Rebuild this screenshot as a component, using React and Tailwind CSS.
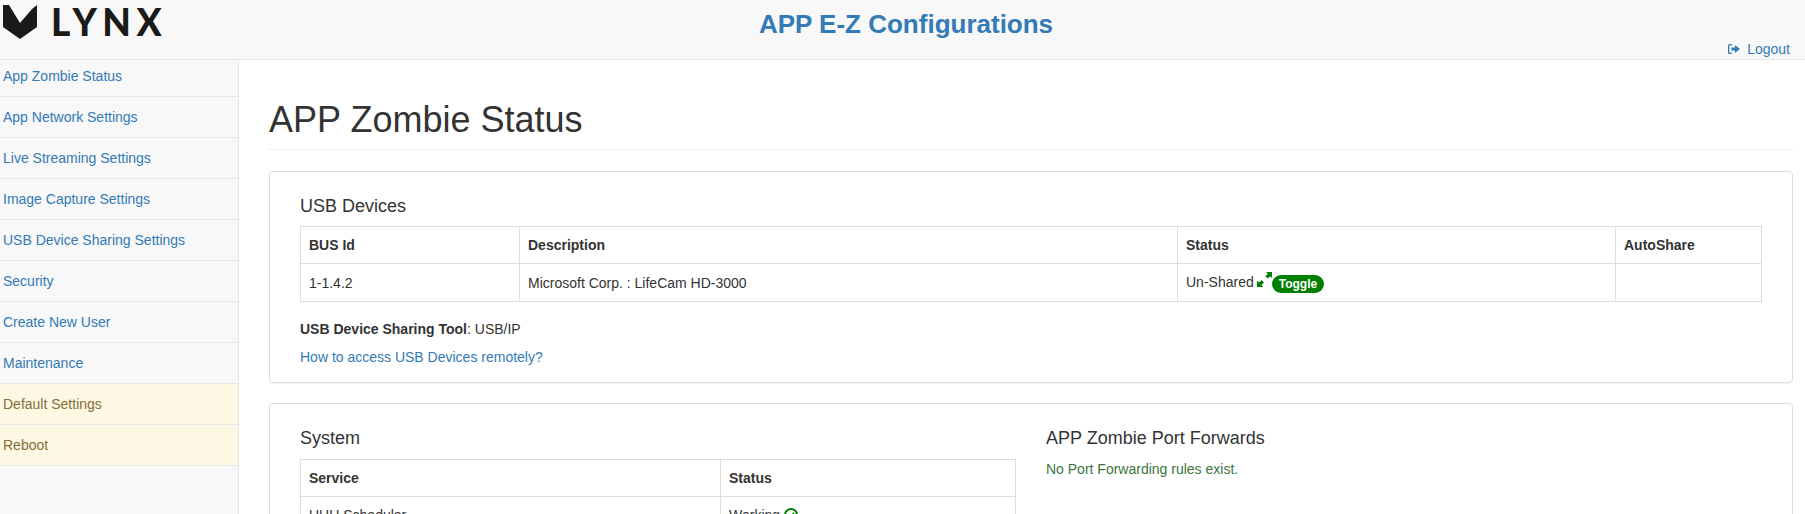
const menu = [
  'App Zombie Status',
  'App Network Settings',
  'Live Streaming Settings',
  'Image Capture Settings',
  'USB Device Sharing Settings',
  'Security',
  'Create New User',
  'Maintenance',
];
const warnMenu = ['Default Settings', 'Reboot'];

const Logo = () => (
  <div className="flex items-start">
    <svg width="34" height="34" viewBox="0 0 34 34" className="mt-[5px] ml-[3px]" fill="#1a1a18">
      <path d="M0 0 H6 L17 18 L29 4 L34 0 V22 L17 34 L0 22 Z" />
    </svg>
    <span className="ml-[14px] font-['Lato',sans-serif] text-[37px] leading-[44px] font-black tracking-[5.6px] text-[#1a1a18]">LYNX</span>
  </div>
);

const LogoutIcon = () => (
  <svg width="12" height="12" viewBox="0 0 12 12" className="mr-[7px] text-[#337ab7]" fill="currentColor">
    <path d="M0 2.5 Q0 1 1.5 1 H4 V2.3 H1.8 Q1.3 2.3 1.3 2.8 V9.2 Q1.3 9.7 1.8 9.7 H4 V11 H1.5 Q0 11 0 9.5 Z" />
    <path d="M3.5 4.5 H7 V2 L12 6 L7 10 V7.5 H3.5 Z" />
  </svg>
);

const ShareIcon = () => (
  <svg width="15" height="15" viewBox="0 0 15 15" className="inline-block ml-[3px] align-[0px]">
    <path d="M0 15 V8.5 L2 10.5 L4.6 8 L7 10.4 L4.4 13 L6.5 15 Z" fill="#008000" />
    <path d="M15 0 V6 L13.2 4.2 L10.8 6.6 L8.4 4.2 L10.8 1.8 L9 0 Z" fill="#008000" />
  </svg>
);

const OkCircle = () => (
  <svg width="14" height="14" viewBox="0 0 14 14" className="ml-[4px] inline-block align-[-2px]" fill="none" stroke="#008000" strokeWidth="2">
    <circle cx="7" cy="7" r="6" />
    <path d="M4 7.2 L6.2 9.2 L10 4.8" strokeWidth="1.5" />
  </svg>
);

const Th = ({ children, className = '' }) => (
  <th className={`border border-[#ddd] p-2 text-left text-sm font-bold leading-5 text-[#333] ${className}`}>{children}</th>
);
const Td = ({ children, className = '' }) => (
  <td className={`border border-[#ddd] p-2 text-sm leading-5 text-[#333] ${className}`}>{children}</td>
);

export default function App() {
  return (
    <div className="flex h-[514px] flex-col overflow-hidden bg-white font-['Liberation_Sans',Arial,sans-serif] text-sm text-[#333]">
      <header className="relative h-[60px] shrink-0 border-b border-[#e7e7e7] bg-[#f8f8f8]">
        <Logo />
        <h1 className="absolute inset-x-0 top-[9px] pl-[7px] text-center text-[26px] leading-[30px] font-bold text-[#337ab7]">APP E-Z Configurations</h1>
        <a className="absolute right-[15px] top-[39px] flex items-center text-sm leading-5 text-[#337ab7]">
          <LogoutIcon />
          Logout
        </a>
      </header>
      <div className="flex min-h-0 flex-1">
        <aside className="w-[239px] shrink-0 border-r border-[#e7e7e7] bg-[#f8f8f8]">
          {menu.map((item, i) => (
            <a key={item} className={`block border-b border-[#e7e7e7] pl-[3px] leading-5 text-[#337ab7] ${i === 0 ? 'h-[37px] pt-[6px]' : 'h-[41px] pt-[10px]'}`}>{item}</a>
          ))}
          {warnMenu.map((item) => (
            <a key={item} className="block h-[41px] border-b border-[#e7e7e7] bg-[#fcf8e3] pl-[3px] pt-[10px] leading-5 text-[#8a6d3b]">{item}</a>
          ))}
        </aside>
        <main className="min-w-0 flex-1 pl-[30px] pr-[12px]">
          <div className="mt-[40px] mb-[21px] border-b border-[#eee] pb-[9px]">
            <h2 className="text-[36px] leading-[40px] font-normal text-[#333]">APP Zombie Status</h2>
          </div>
          <section className="mb-[20px] rounded border border-[#ddd] pt-[15px] pb-[15px] pl-[30px] pr-[30px] shadow-[0_1px_1px_rgba(0,0,0,0.05)]">
            <h3 className="mt-[9px] mb-[10px] text-lg leading-5 font-normal text-[#333]">USB Devices</h3>
            <table className="w-full table-fixed border-collapse">
              <thead>
                <tr>
                  <Th className="w-[219px]">BUS Id</Th>
                  <Th className="w-[658px]">Description</Th>
                  <Th className="w-[438px]">Status</Th>
                  <Th>AutoShare</Th>
                </tr>
              </thead>
              <tbody>
                <tr>
                  <Td>1-1.4.2</Td>
                  <Td>Microsoft Corp. : LifeCam HD-3000</Td>
                  <Td>
                    Un-Shared
                    <ShareIcon />
                    <span className="inline-block rounded-[10px] bg-[#008000] px-[7px] py-[3px] align-[-1px] text-xs leading-3 font-bold text-white">Toggle</span>
                  </Td>
                  <Td></Td>
                </tr>
              </tbody>
            </table>
            <p className="mt-[17px] leading-5"><b>USB Device Sharing Tool</b>: USB/IP</p>
            <p className="mt-[8px] leading-5 text-[#337ab7]">How to access USB Devices remotely?</p>
          </section>
          <section className="rounded border border-[#ddd] py-[15px] pl-[30px] pr-[30px]">
            <div className="grid grid-cols-2 gap-[30px]">
              <div>
                <h3 className="mt-[9px] mb-[11px] text-lg leading-5 font-normal text-[#333]">System</h3>
                <table className="w-full table-fixed border-collapse">
                  <thead>
                    <tr>
                      <Th className="w-[420px]">Service</Th>
                      <Th>Status</Th>
                    </tr>
                  </thead>
                  <tbody>
                    <tr>
                      <Td>UHU Scheduler</Td>
                      <Td>
                        Working
                        <OkCircle />
                      </Td>
                    </tr>
                  </tbody>
                </table>
              </div>
              <div>
                <h3 className="mt-[9px] mb-[11px] text-lg leading-5 font-normal text-[#333]">APP Zombie Port Forwards</h3>
                <p className="mt-[1px] text-sm leading-5 text-[#3c763d]">No Port Forwarding rules exist.</p>
              </div>
            </div>
          </section>
        </main>
      </div>
    </div>
  );
}
